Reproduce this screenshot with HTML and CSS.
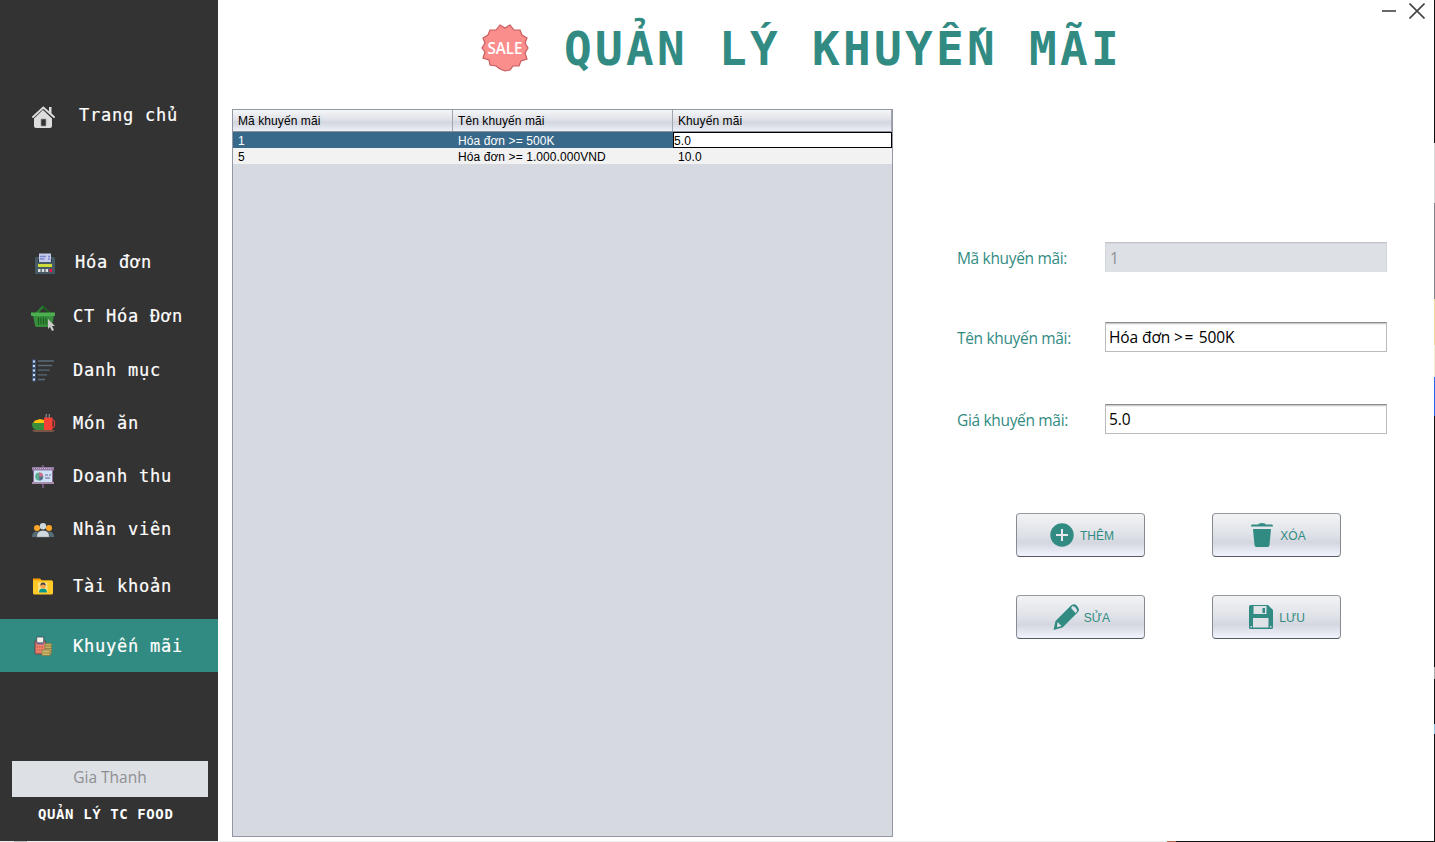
FILE: index.html
```html
<!DOCTYPE html>
<html lang="vi">
<head>
<meta charset="utf-8">
<title>Quản lý khuyến mãi</title>
<link rel="stylesheet" href="styles.css">
</head>
<body>
<div class="app">
  <aside class="sidebar">
    <nav class="nav">
      <a class="nav-item home">
        <svg class="icon" viewBox="0 0 24 24"><path d="M3 13 12 5l9 8v9q0 2-2 2H5q-2 0-2-2z" fill="#ddd"/><path d="M2 14.500 12 5l10 9.500" fill="none" stroke="#333" stroke-width="1.500"/><path d="M2 13 12.300 3.500 23 13" fill="none" stroke="#ddd" stroke-width="1.900" stroke-linecap="round"/><path d="M10 15h5v7h-5z" fill="#333" stroke="#999" stroke-width=".7"/><path d="M18 3h2.500v7L18 7.500z" fill="#ddd"/></svg>
        <span>Trang chủ</span>
      </a>
      <a class="nav-item invoice">
        <svg class="icon" viewBox="0 0 24 24"><path d="M6 6H5q-1 0-1 2v15h20V8q0-2-2-2z" fill="#455a64"/><path d="M7 8h14v3H7z" fill="#263238"/><path d="M8 2l1 1 1-1 1 1 1-1 1 1 1-1 1 1 1-1 1 1 1-1 1 1 1-1v9H8z" fill="#c5cae9"/><path d="M9 5.500h6M9 8h4.500M17 5.500h2M17 8h2" stroke="#7986cb" stroke-width="1.300"/><path d="M7 13h14v3H7z" fill="#cddc39"/><path d="M7 18h2.500v3H7zm3.800 0h2.500v3h-2.500zm3.800 0h2.500v3h-2.500z" fill="#ddd"/><path d="M18.500 18H21v3h-2.500z" fill="#f50f4b"/></svg>
        <span>Hóa đơn</span>
      </a>
      <a class="nav-item">
        <svg class="icon" viewBox="0 0 24 24"><path d="M5 9 12 1.500l7 7" fill="none" stroke="#1b5e20" stroke-width="2"/><path d="M5 9 12 1.500" stroke="#2e7d32" stroke-width="2"/><path d="M2 10h21l-2 10.500q-.3 1.500-2 1.500H6q-1.700 0-2-1.500z" fill="#388e3c"/><path d="M0 7.500h24V10q0 1-1 1H1q-1 0-1-1z" fill="#4caf50"/><path d="M7.500 12.500v7M10 12.500v7M12.500 12.500v7M15 12.500v7" stroke="#1b5e20" stroke-width="1.200"/><path d="M17 14v10l2-2 2 4 2-1-2-4h3z" fill="#c8c8c8"/></svg>
        <span>CT Hóa Đơn</span>
      </a>
      <a class="nav-item">
        <svg class="icon" viewBox="0 0 24 24"><path d="M1 .5h4v4H1zM1 5h4v4H1zm0 4.500h4v4H1zM1 14h4v4H1zm0 4.500h4v4H1z" fill="#3f5678"/><path d="M2 1.500h2v2H2zM2 6h2v2H2zm0 4.500h2v2H2zM2 15h2v2H2zm0 4.500h2v2H2z" fill="#c8dcf0"/><path d="M7 2h16M7 6.500h14M7 11.200h11.500M7 15.800h9M7 20.500h7" stroke="#5b6c78" stroke-width="1.300"/></svg>
        <span>Danh mục</span>
      </a>
      <a class="nav-item">
        <svg class="icon" viewBox="0 0 24 24"><path d="M15.500 6q-1-1.500 0-4M18.500 6q-1-1.500 0-4" fill="none" stroke="#90a4ae"/><path d="M2 12q1-4 4-4l3-1 4 1v4z" fill="#ffc107"/><path d="M1 11h13v7H5q-4-1-4-7z" fill="#388e3c"/><path d="M20 8h2q1.500 0 1.500 2v3q0 2-2 3H20" fill="none" stroke="#e53935" stroke-width="1.200"/><path d="M13 5.500h8.500v11q0 1.500-1.500 1.500h-7z" fill="#f44336"/><path d="M1 18h23q-1 2-3 2H4q-2 0-3-2z" fill="#795548"/></svg>
        <span>Món ăn</span>
      </a>
      <a class="nav-item">
        <svg class="icon" viewBox="0 0 24 24"><path d="M12 0v23" stroke="#7e5f8b" stroke-width="1.600"/><path d="M2.500 4h19v14h-19z" fill="#cde3f5" stroke="#876b94"/><path d="M1 2h22v3.500H1z" fill="#957ba4"/><path d="M3 3.500h18" stroke="#c3b3ce" stroke-dasharray="1 1"/><path d="M1 17h22v2H1z" fill="#a78cab"/><circle cx="8.200" cy="11.500" r="4" fill="#5cab91"/><path d="M8.200 11.500v-4a4 4 0 0 1 4 4z" fill="#d76b8b"/><path d="M8.200 11.500v4a4 4 0 0 0 4-4z" fill="#596a89"/><path d="M14 10h3m1 0h2m-6 3h5" stroke="#675f8d"/></svg>
        <span>Doanh thu</span>
      </a>
      <a class="nav-item">
        <svg class="icon" viewBox="0 0 24 24"><path d="M1 19q0-5.500 5-5.500t5 5.500zm12 0q0-5.500 5-5.500t5 5.500z" fill="#546e7a"/><circle cx="6" cy="10" r="3" fill="#ffa726"/><circle cx="18" cy="10" r="3" fill="#ffa726"/><path d="M5.500 19.300q0-7 6.500-7t6.500 7z" fill="#cfd8dc" stroke="#333" stroke-width=".5"/><circle cx="12" cy="8.200" r="3.200" fill="#cfd8dc"/></svg>
        <span>Nhân viên</span>
      </a>
      <a class="nav-item account">
        <svg class="icon" viewBox="0 0 24 24"><path d="M2 3.500h7l2 2h9q2 0 2 2v4H2z" fill="#ffa000"/><path d="M2 5.500h18.500Q22 5.500 22 7v11q0 1.500-1.500 1.500h-17Q2 19.500 2 18z" fill="#ffca28"/><path d="M7 7.500h9.500v10H7z" fill="#ffe082"/><path d="M8 17.500q0-4 4-4t4 4z" fill="#009688"/><circle cx="12" cy="11" r="2.500" fill="#ffa24e"/><path d="M9.500 11Q9 7.500 12 7.500t2.500 3.500Q14 9.500 12 9.500T9.500 11z" fill="#424242"/></svg>
        <span>Tài khoản</span>
      </a>
      <a class="nav-item active">
        <svg class="icon" viewBox="0 0 24 24"><path d="M4 7h10.500v13H5q-1 0-1-1z" fill="#f08368" stroke="#67454b"/><path d="M5.700 3h7v6h-7z" fill="#f3f3eb" stroke="#424b54" stroke-width=".8"/><path d="M5.500 9.500h7.500" stroke="#7a6290" stroke-width="2"/><path d="M5.500 13h7m-7 3h7m-7 3h5" stroke="#b5544f" stroke-dasharray="1.500 1"/><path d="M14 9.500h6.500V20H14z" fill="#c5ae5d" stroke="#81784a" stroke-width=".8"/><path d="M11 16h8v5.500h-8z" fill="#d2b968" stroke="#81784a" stroke-width=".8"/><path d="M14 12h6m-6 2.500h6m-8 4.500h7" stroke="#81784a" stroke-width=".8"/></svg>
        <span>Khuyến mãi</span>
      </a>
    </nav>
    <div class="user">Gia Thanh</div>
    <div class="brand">QUẢN LÝ TC FOOD</div>
  </aside>

  <main class="main">
    <header class="header">
      <svg class="sale" viewBox="-25 -25 50 50"><path class="sale-shape" d="M-5-23 0-20 5-23 9-18 15-18 17-13 22-10 20-5 23 0 20 5 22 11 16 13 14 18 8 18 5 22 0 23-5 21-9 18-15 17-16 12-22 10-20 4-23 0-20-5-22-10-17-13-15-18-9-18Z"/><text class="sale-text" x="0" y="5.500" text-anchor="middle" textLength="35" lengthAdjust="spacingAndGlyphs">SALE</text></svg>
      <h1 class="title">QUẢN LÝ KHUYẾN MÃI</h1>
      <div class="controls">
        <svg class="control" viewBox="0 0 16 16"><path d="M1 8h14"/></svg>
        <svg class="control" viewBox="0 0 16 16"><path d="m.5.5 15 15m0-15-15 15"/></svg>
      </div>
    </header>
    <div class="content">
      <section class="table">
        <div class="row head"><div>Mã khuyến mãi</div><div>Tên khuyến mãi</div><div>Khuyến mãi</div></div>
        <div class="row selected"><div>1</div><div>Hóa đơn &gt;= 500K</div><div class="editing">5.0</div></div>
        <div class="row"><div>5</div><div>Hóa đơn &gt;= 1.000.000VND</div><div>10.0</div></div>
      </section>
      <section class="form">
        <div class="field"><label class="label">Mã khuyến mãi:</label><div class="input disabled">1</div></div>
        <div class="field second"><label class="label">Tên khuyến mãi:</label><div class="input">Hóa đơn <span class="wide">&gt;=</span> 500K</div></div>
        <div class="field third"><label class="label">Giá khuyến mãi:</label><div class="input">5.0</div></div>
        <div class="actions">
          <div class="button"><svg viewBox="0 0 24 24"><circle cx="12" cy="12" r="11.700"/><path d="M12 6v12M6 12h12" stroke="#e4e7eb" stroke-width="2"/></svg><span>THÊM</span></div>
          <div class="button"><svg viewBox="0 0 24 24"><path d="M2 1.500h6.500q0-1.500 3.500-1.500t3.500 1.500H22q1 0 1 2H1q0-2 1-2zM3 6h18l-1.500 16q-.2 2-2 2h-11q-1.800 0-2-2z"/></svg><span>XÓA</span></div>
          <div class="button"><svg viewBox="0 0 24 24"><path d="m-.5 25 2-9L16.500 1Q18-.8 20-.8T23.500 1.500 25 5.500l-1.500 2L8.500 22.500z"/><path d="m3.500 17 4 4-4.500 1.200zM17 3l4.500 5 1.700-2Q23 4 21.500 2.500T18.500 1z" fill="#e0e3e8"/></svg><span>SỬA</span></div>
          <div class="button save"><svg viewBox="0 0 24 24"><path d="M1.500 0H19l5 5v17.500q0 1.500-1.500 1.500h-21Q0 24 0 22.500v-21Q0 0 1.500 0z"/><path d="M4.500 1h13v8h-13zM4 13h15.500v9.500H4z" fill="#dfe2e7"/><path d="M13.500 3H16v5h-2.500z"/><path d="M1.500 21H3v1.500H1.500zm19.500 0h1.500v1.500H21z" fill="#dfe2e7"/></svg><span>LƯU</span></div>
        </div>
      </section>
    </div>
  </main>
  <div class="edge-right"></div>
  <div class="edge-bottom"></div>
</div>
</body>
</html>
```
FILE: styles.css
```css
* { box-sizing: border-box; }
body { margin: 0; overflow: hidden; background: #fff; font-family: "Liberation Sans", sans-serif; }
.app { display: grid; grid-template-columns: 218px 1216px 1px; grid-template-rows: 841px 1px; width: 1435px; height: 842px; }
.sidebar { background: #333; color: #fff; font-family: "DejaVu Sans Mono", monospace; }
.nav { padding-top: 89px; }
.nav-item { display: flex; align-items: center; gap: 18px; height: 53px; padding-left: 31px; font-size: 17px; letter-spacing: .77px; white-space: nowrap; }
.nav-item span { padding-bottom: 2px; -webkit-text-stroke: .2px #fff; }
.icon { width: 24px; height: 24px; flex: none; overflow: visible; }
.nav-item.home { gap: 24px; margin-bottom: 94px; }
.nav-item.invoice { gap: 20px; }
.nav-item.invoice + .nav-item { margin: 1px 0; }
.nav-item.account { margin-top: 4px; margin-bottom: 6px; }
.nav-item.active { background: #328b82; }
.nav-item.active span { padding-bottom: 0; }
.user { width: 196px; height: 36px; margin: 89px 0 0 12px; background: #dde0e5; color: #8e8f91; font: 15.500px/33px "Open Sans", sans-serif; text-align: center; }
.brand { padding: 9px 0 0 38px; font-size: 14px; line-height: 17px; font-weight: bold; letter-spacing: .6px; white-space: nowrap; }
.main { display: flex; flex-direction: column; }
.header { position: relative; display: flex; height: 109px; padding-left: 262px; }
.sale { width: 50px; height: 50px; margin-top: 23px; flex: none; }
.sale-shape { fill: #fa8e8d; stroke: #c85c5c; stroke-width: 1.200; }
.sale-text { fill: #fff; font: 600 16.500px "Open Sans", sans-serif; }
.title { margin: 18px 0 0 34px; color: #328b82; font: bold 46px/62px "DejaVu Sans Mono", monospace; letter-spacing: 3.300px; white-space: nowrap; }
.controls { position: absolute; top: 3px; right: 9px; display: flex; gap: 12px; }
.control { width: 16px; height: 16px; fill: none; stroke: #444; stroke-width: 1.600; }
.content { display: flex; align-items: flex-start; }
.table { width: 661px; height: 728px; margin-left: 14px; border: 1px solid #9297a1; background: #d6d9df; font-size: 12px; line-height: 16px; letter-spacing: .08px; }
.row { display: grid; grid-template-columns: 220px 220px 219px; height: 16px; background: #f2f2f2; }
.row > div { height: 16px; padding: 1px 5px 0; white-space: nowrap; }
.row.head { height: 22px; line-height: 20px; border-bottom: 1px solid #8b909c; background: linear-gradient(#f5f6f8, #dfe2e8 45%, #d3d6de 60%, #edf0f7); }
.row.head > div { height: 21px; border-right: 1px solid #a2a6b0; }
.row.selected { background: #39698a; color: #fff; }
.row > .editing { padding: 0; border: 1px solid #000; background: #fff; color: #000; }
.form { margin: 133px 0 0 64px; }
.field { display: flex; align-items: center; height: 30px; }
.field.second { margin-top: 50px; }
.field.third { margin-top: 52px; }
.label { width: 148px; padding-top: 1px; color: #328b82; font: 15.500px/30px "Open Sans", sans-serif; letter-spacing: -.33px; white-space: nowrap; }
.input { width: 282px; height: 30px; padding: 0 3px; border: 1px solid #bbb; border-top-color: #8c8c8c; box-shadow: inset 0 1px #ccc, inset 0 2px #f0f0f0; font: 15.500px/28px "Open Sans", sans-serif; letter-spacing: -.1px; white-space: nowrap; }
.wide { letter-spacing: 1.500px; }
.input.disabled { padding-left: 4px; background: #dde0e5; border-color: #d3d5dc #d3d5dc #dde0e5; border-top-color: #c0c3c9; box-shadow: inset 0 1px #d4d7dc; color: #8e8f91; line-height: 30px; }
.actions { display: grid; grid-template-columns: 129px 129px; column-gap: 67px; row-gap: 38px; margin: 79px 0 0 59px; }
.button { display: flex; align-items: center; justify-content: center; gap: 6px; height: 44px; padding-left: 3px; border: 1px solid #878a91; border-top-color: #9699a0; border-bottom-color: #555962; border-radius: 4px; background: linear-gradient(#f2f3f5, #dfe2e7 48%, #d4d7df 68%, #f1f4fc); color: #328b82; font-size: 12px; }
.button.save { padding-left: 1px; }
.button span { padding-top: 1px; }
.button svg { width: 24px; height: 24px; fill: #328b82; overflow: visible; }
.edge-right { background: linear-gradient(#111 0 143px, #d8d8d8 143px 203px, #85838c 203px 299px, #f4d699 299px 345px, #f7ebd1 345px 377px, #2c66ef 377px 416px, #111 416px 667px, #aaa 667px 679px, #111 679px 724px, #8fc9ed 724px 734px, #111 734px); }
.edge-bottom { grid-column: 1 / -1; background: linear-gradient(90deg, #eee 0 14px, #bbb 14px 27px, #eee 27px 1167px, #b36a4c 1167px 1176px, #111 1176px); }
```
